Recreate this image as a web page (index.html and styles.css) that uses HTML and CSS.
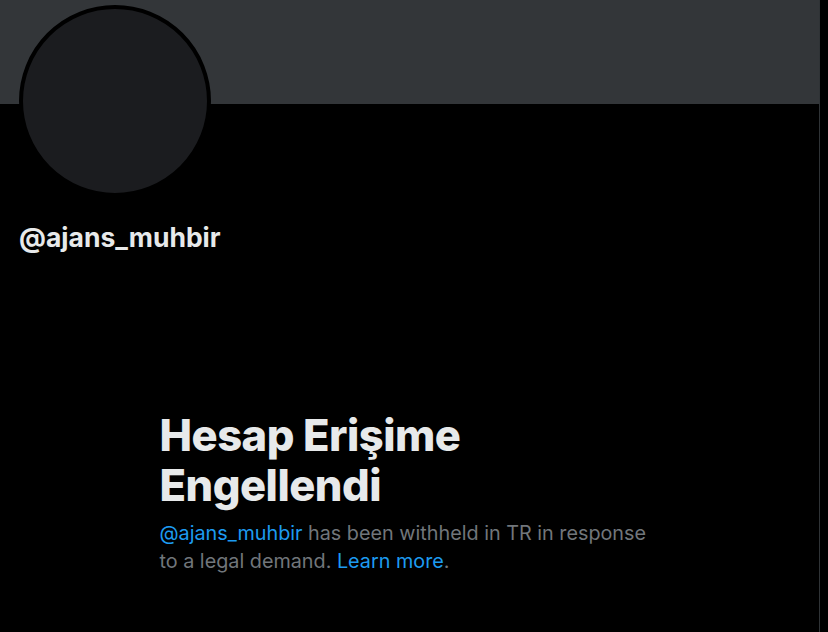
FILE: index.html
```html
<!DOCTYPE html>
<html lang="tr">
<head>
  <meta charset="UTF-8" />
  <meta name="viewport" content="width=device-width, initial-scale=1.0"/>
  <title>@ajans_muhbir</title>
  <link rel="stylesheet" href="styles.css">
</head>
<body>
  <main class="column">
    <div class="banner"></div>

    <div class="profile">
      <div class="avatar"></div>
      <div class="handle">@ajans_muhbir</div>
    </div>

    <section class="withheld">
      <h1>Hesap Erişime Engellendi</h1>
      <p><a href="#">@ajans_muhbir</a> has been withheld in TR in response<br>to a legal demand. <a href="#">Learn more</a>.</p>
    </section>
  </main>
</body>
</html>
```

FILE: styles.css
```css
:root {
  --bg:      #000;
  --banner:  #333639;
  --avatar:  #1b1c1f;
  --border:  #2f3336;
  --text:    #e7e9ea;
  --muted:   #71767b;
  --blue:    #1d9bf0;
}
* { box-sizing: border-box; margin: 0; padding: 0; }
html, body { height: 100%; }
body {
  background: var(--bg);
  font-family: Inter, "Noto Sans", sans-serif;
  color: var(--text);
}
.column {
  width: 820px;
  min-height: 100%;
  border-right: 1px solid var(--border);
}
.banner {
  height: 104px;
  background: var(--banner);
}

/* avatar sits half over the banner */
.profile {
  padding: 0 19px;
}
.avatar {
  width: 192px;
  height: 192px;
  margin-top: -99px;
  border: 4px solid var(--bg);
  border-radius: 50%;
  background: var(--avatar);
}
.handle {
  margin-top: 24px;
  font-size: 26.5px;
  font-weight: 700;
  line-height: 32px;
}

/* withheld notice */
.withheld {
  width: 500px;
  margin: 157px auto 0;
}
.withheld h1 {
  font-size: 43.5px;
  font-weight: 800;
  line-height: 50px;
  letter-spacing: -0.5px;
}
.withheld p {
  margin-top: 9px;
  color: var(--muted);
  font-size: 19.8px;
  line-height: 28px;
}
.withheld a {
  color: var(--blue);
  text-decoration: none;
}
```
